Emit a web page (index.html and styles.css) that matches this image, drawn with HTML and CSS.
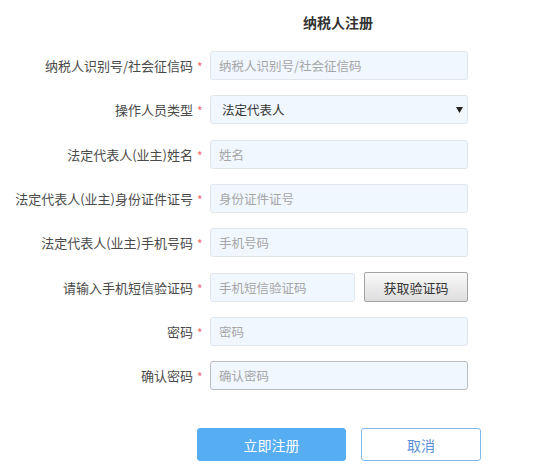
FILE: index.html
```html
<!DOCTYPE html>
<html lang="zh-CN">
<head>
<meta charset="utf-8">
<title>纳税人注册</title>
<link rel="stylesheet" href="styles.css">
</head>
<body>
<div class="page">
  <h1 class="title">纳税人注册</h1>
  <form class="form">
    <div class="row">
      <label class="label">纳税人识别号/社会征信码<span class="req">*</span></label>
      <input class="field" type="text" placeholder="纳税人识别号/社会征信码">
    </div>
    <div class="row">
      <label class="label">操作人员类型<span class="req">*</span></label>
      <div class="select-wrap">
        <select class="field select">
          <option>法定代表人</option>
        </select>
        <svg class="arrow" width="7" height="6" viewBox="0 0 7 6"><path d="M0 0H7L3.5 6Z" fill="#222"/></svg>
      </div>
    </div>
    <div class="row">
      <label class="label">法定代表人(业主)姓名<span class="req">*</span></label>
      <input class="field" type="text" placeholder="姓名">
    </div>
    <div class="row">
      <label class="label">法定代表人(业主)身份证件证号<span class="req">*</span></label>
      <input class="field" type="text" placeholder="身份证件证号">
    </div>
    <div class="row">
      <label class="label">法定代表人(业主)手机号码<span class="req">*</span></label>
      <input class="field" type="text" placeholder="手机号码">
    </div>
    <div class="row">
      <label class="label">请输入手机短信验证码<span class="req">*</span></label>
      <div class="sms">
        <input class="field sms-field" type="text" placeholder="手机短信验证码">
        <button class="code-btn" type="button">获取验证码</button>
      </div>
    </div>
    <div class="row">
      <label class="label">密码<span class="req">*</span></label>
      <input class="field" type="password" placeholder="密码">
    </div>
    <div class="row">
      <label class="label">确认密码<span class="req">*</span></label>
      <input class="field focused" type="password" placeholder="确认密码">
    </div>
    <div class="actions">
      <button class="btn primary" type="button">立即注册</button>
      <button class="btn ghost" type="button">取消</button>
    </div>
  </form>
</div>
</body>
</html>
```

FILE: styles.css
```css
* { box-sizing: border-box; }
html, body { margin: 0; padding: 0; background: #fff; }
body {
  font-family: "Noto Sans CJK SC", "Noto Sans", "Liberation Sans", sans-serif;
  color: #444;
  font-size: 13px;
}
.page { width: 554px; padding-top: 12px; }
.title {
  margin: 0 0 0 303px;
  font-size: 14px;
  font-weight: bold;
  line-height: 20px;
  color: #333;
  width: 70px;
  text-align: center;
}
.form {
  margin-top: 19px;
  display: flex;
  flex-direction: column;
  gap: 15.3px;
}
.row {
  display: grid;
  grid-template-columns: 202px 258px;
  column-gap: 8px;
  align-items: center;
  height: 29px;
}
.label {
  text-align: right;
  font-size: 13px;
  color: #4a4a4a;
  white-space: nowrap;
  line-height: 29px;
}
.req {
  color: #f36a6a;
  font-size: 12px;
  margin-left: 4px;
  display: inline-block;
  width: 5px;
  text-align: left;
  position: relative;
  top: 1px;
}
.field {
  width: 258px;
  height: 29px;
  border: 1px solid #e1e6ec;
  border-radius: 3px;
  background: #f0f7ff;
  padding: 0 8px;
  font-family: inherit;
  font-size: 12.5px;
  color: #333;
  outline: none;
}
.field::placeholder { color: #a6a6a6; }
.focused { border-color: #b9bcc2; }
.select-wrap { position: relative; width: 258px; height: 29px; }
.select {
  appearance: none;
  -webkit-appearance: none;
  padding-left: 11px;
  font-size: 12.5px;
  color: #333;
}
.arrow { position: absolute; left: 246px; top: 12px; pointer-events: none; }
.sms { display: flex; gap: 9px; align-items: center; width: 258px; }
.sms-field { width: 145px; }
.code-btn {
  width: 104px;
  height: 30px;
  border: 1px solid #a3a3a3;
  border-radius: 2px;
  background: linear-gradient(#f9f9f9, #dedede);
  font-family: inherit;
  font-size: 13px;
  color: #333;
  padding: 0;
}
.actions {
  margin-top: 23px;
  display: flex;
  gap: 15px;
  padding-left: 197px;
}
.btn {
  height: 33px;
  border-radius: 3px;
  font-family: inherit;
  font-size: 14px;
  padding: 0;
}
.primary {
  width: 149px;
  background: #56adf2;
  border: 1px solid #56adf2;
  color: #fff;
}
.ghost {
  width: 120px;
  background: #fff;
  border: 1px solid #7dbaf0;
  color: #5b8fd8;
}
```
